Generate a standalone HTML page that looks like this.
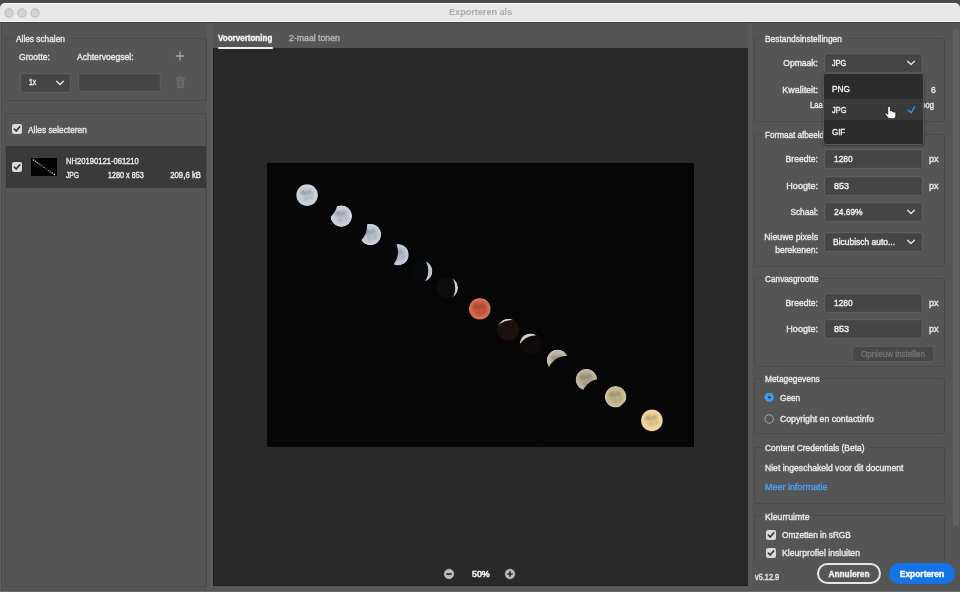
<!DOCTYPE html>
<html><head><meta charset="utf-8">
<style>
*{box-sizing:border-box;margin:0;padding:0}
html,body{width:960px;height:592px;overflow:hidden;background:#4b4b4b}
body{position:relative;font-family:"Liberation Sans",sans-serif;color:#dcdcdc}
.a{position:absolute}
.t{position:absolute;white-space:nowrap;line-height:12px;-webkit-text-stroke:0.4px currentColor}
</style></head><body>
<div class="a" style="left:0px;top:3px;width:960px;height:589px;background:#555555;border-radius:6px 6px 0 0"></div>
<div class="a" style="left:0px;top:22px;width:1px;height:570px;background:#606060"></div>
<div class="a" style="left:1px;top:22px;width:1px;height:570px;background:#4c4c4c"></div>
<div class="a" style="left:207px;top:22px;width:6px;height:568px;background:#5a5a5a"></div>
<div class="a" style="left:748px;top:22px;width:4px;height:568px;background:#5a5a5a"></div>
<div class="a" style="left:207px;top:586px;width:545px;height:4px;background:#5a5a5a"></div>
<div class="a" style="left:0px;top:591px;width:960px;height:1px;background:#6a6a6a"></div>
<div class="a" style="left:0px;top:3px;width:960px;height:19px;background:#e8e8e8;border-top:1px solid #fafafa;border-bottom:1px solid #f6f6f6;border-radius:5px 5px 0 0"></div>
<div class="a" style="left:0px;top:22px;width:960px;height:1px;background:#404040"></div>
<svg class="a" style="left:3.5999999999999996px;top:7.5px" width="10" height="10"><circle cx="5" cy="5" r="4.1" fill="#d4d4d4" stroke="#bdbdbd" stroke-width="1.1"/></svg>
<svg class="a" style="left:16.6px;top:7.5px" width="10" height="10"><circle cx="5" cy="5" r="4.1" fill="#d4d4d4" stroke="#bdbdbd" stroke-width="1.1"/></svg>
<svg class="a" style="left:30.0px;top:7.5px" width="10" height="10"><circle cx="5" cy="5" r="4.1" fill="#d4d4d4" stroke="#bdbdbd" stroke-width="1.1"/></svg>
<div class="t" id="t0" style="left:449.30px;transform-origin:0 50%;top:6.45px;font-size:8.5px;letter-spacing:0px;color:#a9a9a9;font-weight:bold;transform:scaleX(1.0704);-webkit-text-stroke:0">Exporteren als</div>
<div class="a" style="left:5px;top:38px;width:202px;height:63px;border:1px solid #4a4a4a;border-radius:2px"></div>
<div class="a" style="left:13px;top:37px;width:56px;height:3px;background:#555555"></div>
<div class="t" id="t1" style="left:16.00px;transform-origin:0 50%;top:32.71px;font-size:9.5px;letter-spacing:0px;color:#e8e8e8;font-weight:normal;transform:scaleX(0.8741);">Alles schalen</div>
<div class="t" id="t2" style="left:18.70px;transform-origin:0 50%;top:50.71px;font-size:9.5px;letter-spacing:0px;color:#e8e8e8;font-weight:normal;transform:scaleX(0.9019);">Grootte:</div>
<div class="t" id="t3" style="left:77.00px;transform-origin:0 50%;top:50.71px;font-size:9.5px;letter-spacing:0px;color:#e8e8e8;font-weight:normal;transform:scaleX(0.9006);">Achtervoegsel:</div>
<svg class="a" style="left:175px;top:51px" width="10" height="10"><path d="M5 0.8v8.4M0.8 5h8.4" stroke="#a9a9a9" stroke-width="1.3"/></svg>
<div class="a" style="left:19.5px;top:72.5px;width:51.5px;height:20px;background:#454545;border:1px solid #5e5e5e;border-radius:3px;box-shadow:inset 0 0 0 0.5px #4e4e4e"></div>
<div class="t" id="t4" style="left:28.50px;transform-origin:0 50%;top:76.21px;font-size:9.5px;letter-spacing:0px;color:#eeeeee;font-weight:normal;transform:scaleX(0.7226);">1x</div>
<svg class="a" style="left:55px;top:79.5px" width="10" height="6"><path d="M1.6 1.3l3.4 3.3l3.4-3.3" stroke="#e0e0e0" stroke-width="1.4" fill="none" stroke-linecap="round" stroke-linejoin="round"/></svg>
<div class="a" style="left:78px;top:73px;width:83px;height:19px;background:#454545;border:1px solid #5e5e5e;border-radius:3px;box-shadow:inset 0 0 0 0.5px #4e4e4e"></div>
<svg class="a" style="left:175px;top:76px" width="11" height="13"><path d="M0.6 2.2h9.8" stroke="#6e6e6e" stroke-width="1.2"/><path d="M3.8 2V0.9h3.4V2" stroke="#6e6e6e" stroke-width="1" fill="none"/><path d="M1.6 3.4h7.8l-0.8 8.8h-6.2z" fill="#6e6e6e"/><path d="M3.9 4.5v6.5M5.5 4.5v6.5M7.1 4.5v6.5" stroke="#555" stroke-width="0.7"/></svg>
<div class="a" style="left:5px;top:113px;width:202px;height:474px;border:1px solid #4a4a4a;border-radius:2px"></div>
<svg class="a" style="left:12px;top:124px" width="10" height="10"><rect x="0" y="0" width="10" height="10" rx="2" fill="#d9d9d9"/><path d="M2.3 5.1l1.9 2L7.8 2.8" stroke="#2e2e2e" stroke-width="1.5" fill="none" stroke-linecap="round" stroke-linejoin="round"/></svg>
<div class="t" id="t5" style="left:28.00px;transform-origin:0 50%;top:123.71px;font-size:9.5px;letter-spacing:0px;color:#e8e8e8;font-weight:normal;transform:scaleX(0.8778);">Alles selecteren</div>
<div class="a" style="left:6px;top:146px;width:200px;height:42px;background:#3a3a3a"></div>
<svg class="a" style="left:12px;top:162px" width="10" height="10"><rect x="0" y="0" width="10" height="10" rx="2" fill="#d9d9d9"/><path d="M2.3 5.1l1.9 2L7.8 2.8" stroke="#2e2e2e" stroke-width="1.5" fill="none" stroke-linecap="round" stroke-linejoin="round"/></svg>
<svg class="a" style="left:31px;top:158px" width="26" height="18"><rect width="26" height="18" fill="#030303"/><circle cx="2.44" cy="2.03" r="0.85" fill="#c4ccd6"/><circle cx="4.52" cy="3.37" r="0.85" fill="#b0b8c0"/><circle cx="6.30" cy="4.53" r="0.85" fill="#9aa2aa"/><circle cx="7.98" cy="5.81" r="0.85" fill="#7a8088"/><circle cx="9.41" cy="6.86" r="0.85" fill="#5a6068"/><circle cx="10.97" cy="7.91" r="0.85" fill="#484850"/><circle cx="12.96" cy="9.24" r="0.85" fill="#e07050"/><circle cx="14.69" cy="10.56" r="0.85" fill="#4a3028"/><circle cx="16.04" cy="11.48" r="0.85" fill="#3a3028"/><circle cx="17.69" cy="12.50" r="0.85" fill="#8a8070"/><circle cx="19.45" cy="13.73" r="0.85" fill="#a09070"/><circle cx="21.23" cy="14.82" r="0.85" fill="#c0a870"/><circle cx="23.44" cy="16.31" r="0.85" fill="#f0d090"/></svg>
<div class="t" id="t6" style="left:65.50px;transform-origin:0 50%;top:155.11px;font-size:9.5px;letter-spacing:0px;color:#ececec;font-weight:normal;transform:scaleX(0.8015);">NH20190121-061210</div>
<div class="t" id="t7" style="left:65.50px;transform-origin:0 50%;top:168.51px;font-size:9.5px;letter-spacing:0px;color:#ececec;font-weight:normal;transform:scaleX(0.7097);">JPG</div>
<div class="t" id="t8" style="left:108.00px;transform-origin:0 50%;top:168.51px;font-size:9.5px;letter-spacing:0px;color:#ececec;font-weight:normal;transform:scaleX(0.7618);">1280 x 853</div>
<div class="t" id="t9" style="left:-98.60px;width:300px;text-align:right;transform-origin:100% 50%;top:168.51px;font-size:9.5px;letter-spacing:0px;color:#ececec;font-weight:normal;transform:scaleX(0.8217);">209,6 kB</div>
<div class="a" style="left:213px;top:48px;width:535px;height:538px;background:#292929;border-left:1px solid #202020;border-bottom:1px solid #202020"></div>
<div class="t" id="t10" style="left:218.00px;transform-origin:0 50%;top:31.68px;font-size:9px;letter-spacing:0px;color:#f4f4f4;font-weight:bold;transform:scaleX(0.8923);">Voorvertoning</div>
<div class="a" style="left:218px;top:47px;width:55px;height:2px;background:#eeeeee;border-radius:1px"></div>
<div class="t" id="t11" style="left:288.80px;transform-origin:0 50%;top:31.51px;font-size:9.5px;letter-spacing:0px;color:#b4b4b4;font-weight:normal;transform:scaleX(0.9184);">2-maal tonen</div>
<svg class="a" style="left:267px;top:163px" width="427" height="284">
<rect width="427" height="284" fill="#060606"/>
<defs>
<filter id="bl" x="-50%" y="-50%" width="200%" height="200%"><feGaussianBlur stdDeviation="0.55"/></filter>
<filter id="bm" x="-50%" y="-50%" width="200%" height="200%"><feGaussianBlur stdDeviation="0.9"/></filter>
<radialGradient id="gw" cx="50%" cy="50%" r="50%"><stop offset="0.6" stop-color="#fff" stop-opacity="0"/><stop offset="0.95" stop-color="#fff" stop-opacity=".18"/><stop offset="1" stop-color="#000" stop-opacity=".2"/></radialGradient>
<mask id="m1"><circle cx="74.3" cy="53.1" r="10.8" fill="#fff"/><circle cx="50.7" cy="38.4" r="20" fill="#000" filter="url(#bl)"/></mask>
<mask id="m2"><circle cx="103.4" cy="71.5" r="10.8" fill="#fff"/><circle cx="80.1" cy="63.0" r="20" fill="#000" filter="url(#bl)"/></mask>
<mask id="m3"><circle cx="131.0" cy="91.7" r="10.8" fill="#fff"/><circle cx="111.0" cy="88.9" r="20" fill="#000" filter="url(#bl)"/></mask>
<mask id="m4"><circle cx="154.6" cy="108.2" r="10.8" fill="#fff"/><circle cx="141.2" cy="107.7" r="20" fill="#000" filter="url(#bl)"/></mask>
<mask id="m5"><circle cx="180.2" cy="124.8" r="10.8" fill="#fff"/><circle cx="168.2" cy="125.2" r="20" fill="#000" filter="url(#bl)"/></mask>
<mask id="m7"><circle cx="241.2" cy="166.6" r="10.8" fill="#fff"/><circle cx="245.0" cy="176.9" r="20" fill="#000" filter="url(#bl)"/></mask>
<mask id="m8"><circle cx="263.5" cy="181.2" r="10.8" fill="#fff"/><circle cx="269.4" cy="192.2" r="20" fill="#000" filter="url(#bl)"/></mask>
<mask id="m9"><circle cx="290.5" cy="197.3" r="10.8" fill="#fff"/><circle cx="300.1" cy="212.7" r="20" fill="#000" filter="url(#bl)"/></mask>
<mask id="m10"><circle cx="319.4" cy="216.6" r="10.8" fill="#fff"/><circle cx="334.3" cy="235.7" r="20" fill="#000" filter="url(#bl)"/></mask>
<mask id="m11"><circle cx="348.6" cy="233.8" r="10.8" fill="#fff"/><circle cx="368.7" cy="256.1" r="20" fill="#000" filter="url(#bl)"/></mask>
</defs>
<circle cx="40.1" cy="32.1" r="10.8" fill="#c4ccd6"/><ellipse cx="36.6" cy="29.6" rx="3.4" ry="2.6" fill="#303840" opacity="0.26" filter="url(#bm)"/><ellipse cx="42.6" cy="29.1" rx="2.8" ry="2.4" fill="#303840" opacity="0.24" filter="url(#bm)"/><ellipse cx="39.1" cy="35.6" rx="2.8" ry="1.8" fill="#303840" opacity="0.16" filter="url(#bm)"/><ellipse cx="44.6" cy="34.1" rx="1.6" ry="2.2" fill="#303840" opacity="0.18" filter="url(#bm)"/><ellipse cx="40.1" cy="31.6" rx="1.5" ry="1.5" fill="#303840" opacity="0.14" filter="url(#bm)"/><circle cx="40.1" cy="32.1" r="10.8" fill="url(#gw)"/>
<circle cx="74.3" cy="53.1" r="10.8" fill="#070708"/><g mask="url(#m1)"><circle cx="74.3" cy="53.1" r="10.8" fill="#c2cad4"/><ellipse cx="70.8" cy="50.6" rx="3.4" ry="2.6" fill="#303840" opacity="0.26" filter="url(#bm)"/><ellipse cx="76.8" cy="50.1" rx="2.8" ry="2.4" fill="#303840" opacity="0.24" filter="url(#bm)"/><ellipse cx="73.3" cy="56.6" rx="2.8" ry="1.8" fill="#303840" opacity="0.16" filter="url(#bm)"/><ellipse cx="78.8" cy="55.1" rx="1.6" ry="2.2" fill="#303840" opacity="0.18" filter="url(#bm)"/><ellipse cx="74.3" cy="52.6" rx="1.5" ry="1.5" fill="#303840" opacity="0.14" filter="url(#bm)"/><circle cx="74.3" cy="53.1" r="10.8" fill="url(#gw)"/></g>
<circle cx="103.4" cy="71.5" r="10.8" fill="#070708"/><g mask="url(#m2)"><circle cx="103.4" cy="71.5" r="10.8" fill="#bec6d0"/><ellipse cx="99.9" cy="69.0" rx="3.4" ry="2.6" fill="#303840" opacity="0.26" filter="url(#bm)"/><ellipse cx="105.9" cy="68.5" rx="2.8" ry="2.4" fill="#303840" opacity="0.24" filter="url(#bm)"/><ellipse cx="102.4" cy="75.0" rx="2.8" ry="1.8" fill="#303840" opacity="0.16" filter="url(#bm)"/><ellipse cx="107.9" cy="73.5" rx="1.6" ry="2.2" fill="#303840" opacity="0.18" filter="url(#bm)"/><ellipse cx="103.4" cy="71.0" rx="1.5" ry="1.5" fill="#303840" opacity="0.14" filter="url(#bm)"/><circle cx="103.4" cy="71.5" r="10.8" fill="url(#gw)"/></g>
<circle cx="131.0" cy="91.7" r="10.8" fill="#070709"/><g mask="url(#m3)"><circle cx="131.0" cy="91.7" r="10.8" fill="#bac2cc"/><ellipse cx="127.5" cy="89.2" rx="3.4" ry="2.6" fill="#303840" opacity="0.26" filter="url(#bm)"/><ellipse cx="133.5" cy="88.7" rx="2.8" ry="2.4" fill="#303840" opacity="0.24" filter="url(#bm)"/><ellipse cx="130.0" cy="95.2" rx="2.8" ry="1.8" fill="#303840" opacity="0.16" filter="url(#bm)"/><ellipse cx="135.5" cy="93.7" rx="1.6" ry="2.2" fill="#303840" opacity="0.18" filter="url(#bm)"/><ellipse cx="131.0" cy="91.2" rx="1.5" ry="1.5" fill="#303840" opacity="0.14" filter="url(#bm)"/><circle cx="131.0" cy="91.7" r="10.8" fill="url(#gw)"/></g>
<circle cx="154.6" cy="108.2" r="10.8" fill="#08090b"/><g mask="url(#m4)"><circle cx="154.6" cy="108.2" r="10.8" fill="#b6bec8"/><ellipse cx="151.1" cy="105.7" rx="3.4" ry="2.6" fill="#303840" opacity="0.26" filter="url(#bm)"/><ellipse cx="157.1" cy="105.2" rx="2.8" ry="2.4" fill="#303840" opacity="0.24" filter="url(#bm)"/><ellipse cx="153.6" cy="111.7" rx="2.8" ry="1.8" fill="#303840" opacity="0.16" filter="url(#bm)"/><ellipse cx="159.1" cy="110.2" rx="1.6" ry="2.2" fill="#303840" opacity="0.18" filter="url(#bm)"/><ellipse cx="154.6" cy="107.7" rx="1.5" ry="1.5" fill="#303840" opacity="0.14" filter="url(#bm)"/><circle cx="154.6" cy="108.2" r="10.8" fill="url(#gw)"/></g>
<circle cx="180.2" cy="124.8" r="10.8" fill="#0d0b0e"/><g mask="url(#m5)"><circle cx="180.2" cy="124.8" r="10.8" fill="#c0c8d4"/><ellipse cx="176.7" cy="122.3" rx="3.4" ry="2.6" fill="#303840" opacity="0.26" filter="url(#bm)"/><ellipse cx="182.7" cy="121.8" rx="2.8" ry="2.4" fill="#303840" opacity="0.24" filter="url(#bm)"/><ellipse cx="179.2" cy="128.3" rx="2.8" ry="1.8" fill="#303840" opacity="0.16" filter="url(#bm)"/><ellipse cx="184.7" cy="126.8" rx="1.6" ry="2.2" fill="#303840" opacity="0.18" filter="url(#bm)"/><ellipse cx="180.2" cy="124.3" rx="1.5" ry="1.5" fill="#303840" opacity="0.14" filter="url(#bm)"/><circle cx="180.2" cy="124.8" r="10.8" fill="url(#gw)"/></g>
<circle cx="212.8" cy="145.8" r="10.8" fill="#c95a3a"/><ellipse cx="209.3" cy="143.3" rx="3.4" ry="2.6" fill="#5a2010" opacity="0.26" filter="url(#bm)"/><ellipse cx="215.3" cy="142.8" rx="2.8" ry="2.4" fill="#5a2010" opacity="0.24" filter="url(#bm)"/><ellipse cx="211.8" cy="149.3" rx="2.8" ry="1.8" fill="#5a2010" opacity="0.16" filter="url(#bm)"/><ellipse cx="217.3" cy="147.8" rx="1.6" ry="2.2" fill="#5a2010" opacity="0.18" filter="url(#bm)"/><ellipse cx="212.8" cy="145.3" rx="1.5" ry="1.5" fill="#5a2010" opacity="0.14" filter="url(#bm)"/><circle cx="212.8" cy="145.8" r="10.8" fill="url(#gw)"/>
<circle cx="241.2" cy="166.6" r="10.8" fill="#1e100c"/><g mask="url(#m7)"><circle cx="241.2" cy="166.6" r="10.8" fill="#d4c8c0"/><ellipse cx="237.7" cy="164.1" rx="3.4" ry="2.6" fill="#403828" opacity="0.26" filter="url(#bm)"/><ellipse cx="243.7" cy="163.6" rx="2.8" ry="2.4" fill="#403828" opacity="0.24" filter="url(#bm)"/><ellipse cx="240.2" cy="170.1" rx="2.8" ry="1.8" fill="#403828" opacity="0.16" filter="url(#bm)"/><ellipse cx="245.7" cy="168.6" rx="1.6" ry="2.2" fill="#403828" opacity="0.18" filter="url(#bm)"/><ellipse cx="241.2" cy="166.1" rx="1.5" ry="1.5" fill="#403828" opacity="0.14" filter="url(#bm)"/><circle cx="241.2" cy="166.6" r="10.8" fill="url(#gw)"/></g>
<circle cx="263.5" cy="181.2" r="10.8" fill="#0d0a09"/><g mask="url(#m8)"><circle cx="263.5" cy="181.2" r="10.8" fill="#d0c8c0"/><ellipse cx="260.0" cy="178.7" rx="3.4" ry="2.6" fill="#403828" opacity="0.26" filter="url(#bm)"/><ellipse cx="266.0" cy="178.2" rx="2.8" ry="2.4" fill="#403828" opacity="0.24" filter="url(#bm)"/><ellipse cx="262.5" cy="184.7" rx="2.8" ry="1.8" fill="#403828" opacity="0.16" filter="url(#bm)"/><ellipse cx="268.0" cy="183.2" rx="1.6" ry="2.2" fill="#403828" opacity="0.18" filter="url(#bm)"/><ellipse cx="263.5" cy="180.7" rx="1.5" ry="1.5" fill="#403828" opacity="0.14" filter="url(#bm)"/><circle cx="263.5" cy="181.2" r="10.8" fill="url(#gw)"/></g>
<circle cx="290.5" cy="197.3" r="10.8" fill="#080707"/><g mask="url(#m9)"><circle cx="290.5" cy="197.3" r="10.8" fill="#bcb4a4"/><ellipse cx="287.0" cy="194.8" rx="3.4" ry="2.6" fill="#403828" opacity="0.26" filter="url(#bm)"/><ellipse cx="293.0" cy="194.3" rx="2.8" ry="2.4" fill="#403828" opacity="0.24" filter="url(#bm)"/><ellipse cx="289.5" cy="200.8" rx="2.8" ry="1.8" fill="#403828" opacity="0.16" filter="url(#bm)"/><ellipse cx="295.0" cy="199.3" rx="1.6" ry="2.2" fill="#403828" opacity="0.18" filter="url(#bm)"/><ellipse cx="290.5" cy="196.8" rx="1.5" ry="1.5" fill="#403828" opacity="0.14" filter="url(#bm)"/><circle cx="290.5" cy="197.3" r="10.8" fill="url(#gw)"/></g>
<circle cx="319.4" cy="216.6" r="10.8" fill="#080707"/><g mask="url(#m10)"><circle cx="319.4" cy="216.6" r="10.8" fill="#b4aa94"/><ellipse cx="315.9" cy="214.1" rx="3.4" ry="2.6" fill="#403828" opacity="0.26" filter="url(#bm)"/><ellipse cx="321.9" cy="213.6" rx="2.8" ry="2.4" fill="#403828" opacity="0.24" filter="url(#bm)"/><ellipse cx="318.4" cy="220.1" rx="2.8" ry="1.8" fill="#403828" opacity="0.16" filter="url(#bm)"/><ellipse cx="323.9" cy="218.6" rx="1.6" ry="2.2" fill="#403828" opacity="0.18" filter="url(#bm)"/><ellipse cx="319.4" cy="216.1" rx="1.5" ry="1.5" fill="#403828" opacity="0.14" filter="url(#bm)"/><circle cx="319.4" cy="216.6" r="10.8" fill="url(#gw)"/></g>
<circle cx="348.6" cy="233.8" r="10.8" fill="#0a0908"/><g mask="url(#m11)"><circle cx="348.6" cy="233.8" r="10.8" fill="#c4b48c"/><ellipse cx="345.1" cy="231.3" rx="3.4" ry="2.6" fill="#403828" opacity="0.26" filter="url(#bm)"/><ellipse cx="351.1" cy="230.8" rx="2.8" ry="2.4" fill="#403828" opacity="0.24" filter="url(#bm)"/><ellipse cx="347.6" cy="237.3" rx="2.8" ry="1.8" fill="#403828" opacity="0.16" filter="url(#bm)"/><ellipse cx="353.1" cy="235.8" rx="1.6" ry="2.2" fill="#403828" opacity="0.18" filter="url(#bm)"/><ellipse cx="348.6" cy="233.3" rx="1.5" ry="1.5" fill="#403828" opacity="0.14" filter="url(#bm)"/><circle cx="348.6" cy="233.8" r="10.8" fill="url(#gw)"/></g>
<circle cx="384.9" cy="257.4" r="10.8" fill="#eccf94"/><ellipse cx="381.4" cy="254.9" rx="3.4" ry="2.6" fill="#403828" opacity="0.26" filter="url(#bm)"/><ellipse cx="387.4" cy="254.4" rx="2.8" ry="2.4" fill="#403828" opacity="0.24" filter="url(#bm)"/><ellipse cx="383.9" cy="260.9" rx="2.8" ry="1.8" fill="#403828" opacity="0.16" filter="url(#bm)"/><ellipse cx="389.4" cy="259.4" rx="1.6" ry="2.2" fill="#403828" opacity="0.18" filter="url(#bm)"/><ellipse cx="384.9" cy="256.9" rx="1.5" ry="1.5" fill="#403828" opacity="0.14" filter="url(#bm)"/><circle cx="384.9" cy="257.4" r="10.8" fill="url(#gw)"/>
<circle cx="138" cy="43" r="0.5" fill="#2a2a2a"/>
<circle cx="278" cy="21" r="0.5" fill="#2a2a2a"/>
<circle cx="229" cy="104" r="0.5" fill="#2a2a2a"/>
<circle cx="25" cy="144" r="0.5" fill="#2a2a2a"/>
<circle cx="16" cy="123" r="0.5" fill="#2a2a2a"/>
<circle cx="30" cy="26" r="0.5" fill="#2a2a2a"/>
<circle cx="181" cy="235" r="0.5" fill="#2a2a2a"/>
<circle cx="53" cy="63" r="0.5" fill="#2a2a2a"/>
<circle cx="268" cy="269" r="0.5" fill="#2a2a2a"/>
<circle cx="246" cy="113" r="0.5" fill="#2a2a2a"/>
<circle cx="417" cy="13" r="0.5" fill="#2a2a2a"/>
<circle cx="367" cy="82" r="0.5" fill="#2a2a2a"/>
<circle cx="62" cy="33" r="0.5" fill="#2a2a2a"/>
<circle cx="132" cy="232" r="0.5" fill="#2a2a2a"/>
<circle cx="77" cy="165" r="0.5" fill="#2a2a2a"/>
<circle cx="273" cy="106" r="0.5" fill="#2a2a2a"/>
<circle cx="234" cy="18" r="0.5" fill="#2a2a2a"/>
<circle cx="25" cy="58" r="0.5" fill="#2a2a2a"/>
<circle cx="291" cy="121" r="0.5" fill="#2a2a2a"/>
<circle cx="134" cy="166" r="0.5" fill="#2a2a2a"/>
<circle cx="194" cy="85" r="0.5" fill="#2a2a2a"/>
<circle cx="339" cy="199" r="0.5" fill="#2a2a2a"/>
<circle cx="104" cy="163" r="0.5" fill="#2a2a2a"/>
<circle cx="224" cy="249" r="0.5" fill="#2a2a2a"/>
<circle cx="311" cy="82" r="0.5" fill="#2a2a2a"/>
<circle cx="419" cy="34" r="0.5" fill="#2a2a2a"/>
<circle cx="179" cy="215" r="0.5" fill="#2a2a2a"/>
<circle cx="65" cy="139" r="0.5" fill="#2a2a2a"/>
<circle cx="17" cy="190" r="0.5" fill="#2a2a2a"/>
<circle cx="326" cy="163" r="0.5" fill="#2a2a2a"/>
<circle cx="374" cy="89" r="0.5" fill="#2a2a2a"/>
<circle cx="297" cy="169" r="0.5" fill="#2a2a2a"/>
<circle cx="248" cy="130" r="0.5" fill="#2a2a2a"/>
<circle cx="359" cy="268" r="0.5" fill="#2a2a2a"/>
<circle cx="202" cy="189" r="0.5" fill="#2a2a2a"/>
<circle cx="26" cy="199" r="0.5" fill="#2a2a2a"/>
<circle cx="276" cy="282" r="0.5" fill="#2a2a2a"/>
<circle cx="351" cy="81" r="0.5" fill="#2a2a2a"/>
<circle cx="165" cy="190" r="0.5" fill="#2a2a2a"/>
<circle cx="10" cy="131" r="0.5" fill="#2a2a2a"/>
<circle cx="72" cy="33" r="0.5" fill="#2a2a2a"/>
<circle cx="25" cy="218" r="0.5" fill="#2a2a2a"/>
<circle cx="55" cy="70" r="0.5" fill="#2a2a2a"/>
<circle cx="167" cy="247" r="0.5" fill="#2a2a2a"/>
<circle cx="34" cy="128" r="0.5" fill="#2a2a2a"/>
</svg>
<svg class="a" style="left:443px;top:568px" width="12" height="12"><circle cx="6" cy="6" r="5.4" fill="#bdbdbd" stroke="#1e1e1e" stroke-width="0.6"/><path d="M3.3 6h5.4" stroke="#2a2a2a" stroke-width="1.7"/></svg>
<div class="t" id="t12" style="left:471.50px;transform-origin:0 50%;top:568.31px;font-size:9.5px;letter-spacing:0px;color:#f2f2f2;font-weight:normal;transform:scaleX(0.9341);-webkit-text-stroke:0.55px #f2f2f2">50%</div>
<svg class="a" style="left:504px;top:568px" width="12" height="12"><circle cx="6" cy="6" r="5.4" fill="#bdbdbd" stroke="#1e1e1e" stroke-width="0.6"/><path d="M3.3 6h5.4M6 3.3v5.4" stroke="#2a2a2a" stroke-width="1.7"/></svg>
<div class="a" style="left:754px;top:38px;width:191px;height:84px;border:1px solid #4a4a4a;border-radius:2px"></div>
<div class="a" style="left:762px;top:37px;width:84px;height:3px;background:#555555"></div>
<div class="t" id="t13" style="left:765.00px;transform-origin:0 50%;top:32.71px;font-size:9.5px;letter-spacing:0px;color:#e8e8e8;font-weight:normal;transform:scaleX(0.8830);">Bestandsinstellingen</div>
<div class="t" id="t14" style="left:518.00px;width:300px;text-align:right;transform-origin:100% 50%;top:56.71px;font-size:9.5px;letter-spacing:0px;color:#e8e8e8;font-weight:normal;transform:scaleX(0.9014);">Opmaak:</div>
<div class="a" style="left:824px;top:53px;width:99px;height:20px;background:#454545;border:1px solid #5e5e5e;border-radius:3px;box-shadow:inset 0 0 0 0.5px #4e4e4e"></div>
<div class="t" id="t15" style="left:832.00px;transform-origin:0 50%;top:56.71px;font-size:9.5px;letter-spacing:0px;color:#f0f0f0;font-weight:normal;transform:scaleX(0.7633);">JPG</div>
<svg class="a" style="left:906px;top:59.5px" width="10" height="6"><path d="M1.6 1.3l3.4 3.3l3.4-3.3" stroke="#e0e0e0" stroke-width="1.4" fill="none" stroke-linecap="round" stroke-linejoin="round"/></svg>
<div class="t" id="t16" style="left:518.00px;width:300px;text-align:right;transform-origin:100% 50%;top:83.71px;font-size:9.5px;letter-spacing:0px;color:#e8e8e8;font-weight:normal;transform:scaleX(0.9375);">Kwaliteit:</div>
<div class="t" id="t17" style="left:931.00px;transform-origin:0 50%;top:83.71px;font-size:9.5px;letter-spacing:0px;color:#ececec;font-weight:normal;transform:scaleX(0.9000);">6</div>
<div class="t" id="t18" style="left:810.00px;transform-origin:0 50%;top:99.05px;font-size:8.5px;letter-spacing:0px;color:#e8e8e8;font-weight:normal;transform:scaleX(0.9000);">Laag</div>
<div class="t" id="t19" style="left:634.00px;width:300px;text-align:right;transform-origin:100% 50%;top:99.05px;font-size:8.5px;letter-spacing:0px;color:#e8e8e8;font-weight:normal;transform:scaleX(0.9000);">Hoog</div>
<div class="a" style="left:754px;top:134px;width:191px;height:133px;border:1px solid #4a4a4a;border-radius:2px"></div>
<div class="a" style="left:762px;top:133px;width:78px;height:3px;background:#555555"></div>
<div class="t" id="t20" style="left:765.00px;transform-origin:0 50%;top:129.21px;font-size:9.5px;letter-spacing:0px;color:#e8e8e8;font-weight:normal;transform:scaleX(0.8526);">Formaat afbeelding</div>
<div class="t" id="t21" style="left:518.00px;width:300px;text-align:right;transform-origin:100% 50%;top:153.21px;font-size:9.5px;letter-spacing:0px;color:#e8e8e8;font-weight:normal;transform:scaleX(0.9034);">Breedte:</div>
<div class="a" style="left:824px;top:149px;width:99px;height:20px;background:#454545;border:1px solid #5e5e5e;border-radius:3px;box-shadow:inset 0 0 0 0.5px #4e4e4e"></div>
<div class="t" id="t22" style="left:833.50px;transform-origin:0 50%;top:153.21px;font-size:9.5px;letter-spacing:0px;color:#f0f0f0;font-weight:normal;transform:scaleX(0.8801);">1280</div>
<div class="t" id="t23" style="left:929.00px;transform-origin:0 50%;top:153.21px;font-size:9.5px;letter-spacing:0px;color:#e8e8e8;font-weight:normal;transform:scaleX(0.9526);">px</div>
<div class="t" id="t24" style="left:518.00px;width:300px;text-align:right;transform-origin:100% 50%;top:179.71px;font-size:9.5px;letter-spacing:0px;color:#e8e8e8;font-weight:normal;transform:scaleX(0.9517);">Hoogte:</div>
<div class="a" style="left:824px;top:175.5px;width:99px;height:20px;background:#454545;border:1px solid #5e5e5e;border-radius:3px;box-shadow:inset 0 0 0 0.5px #4e4e4e"></div>
<div class="t" id="t25" style="left:833.50px;transform-origin:0 50%;top:179.71px;font-size:9.5px;letter-spacing:0px;color:#f0f0f0;font-weight:normal;transform:scaleX(0.9407);">853</div>
<div class="t" id="t26" style="left:929.00px;transform-origin:0 50%;top:179.71px;font-size:9.5px;letter-spacing:0px;color:#e8e8e8;font-weight:normal;transform:scaleX(0.9526);">px</div>
<div class="t" id="t27" style="left:518.00px;width:300px;text-align:right;transform-origin:100% 50%;top:206.21px;font-size:9.5px;letter-spacing:0px;color:#e8e8e8;font-weight:normal;transform:scaleX(0.8679);">Schaal:</div>
<div class="a" style="left:824px;top:202px;width:99px;height:20px;background:#454545;border:1px solid #5e5e5e;border-radius:3px;box-shadow:inset 0 0 0 0.5px #4e4e4e"></div>
<div class="t" id="t28" style="left:833.50px;transform-origin:0 50%;top:206.21px;font-size:9.5px;letter-spacing:0px;color:#f0f0f0;font-weight:normal;transform:scaleX(0.8881);">24.69%</div>
<svg class="a" style="left:906px;top:209px" width="10" height="6"><path d="M1.6 1.3l3.4 3.3l3.4-3.3" stroke="#e0e0e0" stroke-width="1.4" fill="none" stroke-linecap="round" stroke-linejoin="round"/></svg>
<div class="t" id="t29" style="left:518.00px;width:300px;text-align:right;transform-origin:100% 50%;top:230.51px;font-size:9.5px;letter-spacing:0px;color:#e8e8e8;font-weight:normal;transform:scaleX(0.9173);">Nieuwe pixels</div>
<div class="t" id="t30" style="left:518.00px;width:300px;text-align:right;transform-origin:100% 50%;top:243.51px;font-size:9.5px;letter-spacing:0px;color:#e8e8e8;font-weight:normal;transform:scaleX(0.9009);">berekenen:</div>
<div class="a" style="left:824px;top:232px;width:99px;height:20px;background:#454545;border:1px solid #5e5e5e;border-radius:3px;box-shadow:inset 0 0 0 0.5px #4e4e4e"></div>
<div class="t" id="t31" style="left:833.00px;transform-origin:0 50%;top:236.21px;font-size:9.5px;letter-spacing:0px;color:#f0f0f0;font-weight:normal;transform:scaleX(0.8900);">Bicubisch auto...</div>
<svg class="a" style="left:906px;top:239px" width="10" height="6"><path d="M1.6 1.3l3.4 3.3l3.4-3.3" stroke="#e0e0e0" stroke-width="1.4" fill="none" stroke-linecap="round" stroke-linejoin="round"/></svg>
<div class="a" style="left:754px;top:278px;width:191px;height:89px;border:1px solid #4a4a4a;border-radius:2px"></div>
<div class="a" style="left:762px;top:277px;width:58px;height:3px;background:#555555"></div>
<div class="t" id="t32" style="left:765.00px;transform-origin:0 50%;top:272.71px;font-size:9.5px;letter-spacing:0px;color:#e8e8e8;font-weight:normal;transform:scaleX(0.8690);">Canvasgrootte</div>
<div class="t" id="t33" style="left:518.00px;width:300px;text-align:right;transform-origin:100% 50%;top:297.21px;font-size:9.5px;letter-spacing:0px;color:#e8e8e8;font-weight:normal;transform:scaleX(0.9034);">Breedte:</div>
<div class="a" style="left:824px;top:293px;width:99px;height:20px;background:#454545;border:1px solid #5e5e5e;border-radius:3px;box-shadow:inset 0 0 0 0.5px #4e4e4e"></div>
<div class="t" id="t34" style="left:833.50px;transform-origin:0 50%;top:297.21px;font-size:9.5px;letter-spacing:0px;color:#f0f0f0;font-weight:normal;transform:scaleX(0.8801);">1280</div>
<div class="t" id="t35" style="left:929.00px;transform-origin:0 50%;top:297.21px;font-size:9.5px;letter-spacing:0px;color:#e8e8e8;font-weight:normal;transform:scaleX(0.9526);">px</div>
<div class="t" id="t36" style="left:518.00px;width:300px;text-align:right;transform-origin:100% 50%;top:323.21px;font-size:9.5px;letter-spacing:0px;color:#e8e8e8;font-weight:normal;transform:scaleX(0.9517);">Hoogte:</div>
<div class="a" style="left:824px;top:319px;width:99px;height:20px;background:#454545;border:1px solid #5e5e5e;border-radius:3px;box-shadow:inset 0 0 0 0.5px #4e4e4e"></div>
<div class="t" id="t37" style="left:833.50px;transform-origin:0 50%;top:323.21px;font-size:9.5px;letter-spacing:0px;color:#f0f0f0;font-weight:normal;transform:scaleX(0.9407);">853</div>
<div class="t" id="t38" style="left:929.00px;transform-origin:0 50%;top:323.21px;font-size:9.5px;letter-spacing:0px;color:#e8e8e8;font-weight:normal;transform:scaleX(0.9526);">px</div>
<div class="a" style="left:852px;top:345.5px;width:82px;height:16px;background:#474747;border:1px solid #5c5c5c;border-radius:3px"></div>
<div class="t" id="t39" style="left:742.50px;width:300px;text-align:center;transform-origin:50% 50%;top:347.88px;font-size:9px;letter-spacing:0px;color:#737373;font-weight:normal;transform:scaleX(0.9000);">Opnieuw instellen</div>
<div class="a" style="left:754px;top:378px;width:191px;height:56px;border:1px solid #4a4a4a;border-radius:2px"></div>
<div class="a" style="left:762px;top:377px;width:56px;height:3px;background:#555555"></div>
<div class="t" id="t40" style="left:765.00px;transform-origin:0 50%;top:372.71px;font-size:9.5px;letter-spacing:0px;color:#e8e8e8;font-weight:normal;transform:scaleX(0.8776);">Metagegevens</div>
<svg class="a" style="left:764px;top:393px" width="11" height="10"><circle cx="5.3" cy="4.3" r="4.7" fill="#3b9af4"/><circle cx="5.3" cy="4.3" r="1.2" fill="#2a2a2a"/></svg>
<div class="t" id="t41" style="left:780.40px;transform-origin:0 50%;top:392.21px;font-size:9.5px;letter-spacing:0px;color:#e8e8e8;font-weight:normal;transform:scaleX(0.8663);">Geen</div>
<svg class="a" style="left:764px;top:413.5px" width="11" height="11"><circle cx="5.2" cy="5" r="4.2" fill="none" stroke="#a4a4a4" stroke-width="1.1"/></svg>
<div class="t" id="t42" style="left:780.40px;transform-origin:0 50%;top:413.21px;font-size:9.5px;letter-spacing:0px;color:#e8e8e8;font-weight:normal;transform:scaleX(0.9148);">Copyright en contactinfo</div>
<div class="a" style="left:754px;top:447px;width:191px;height:57px;border:1px solid #4a4a4a;border-radius:2px"></div>
<div class="a" style="left:762px;top:446px;width:106px;height:3px;background:#555555"></div>
<div class="t" id="t43" style="left:765.00px;transform-origin:0 50%;top:441.71px;font-size:9.5px;letter-spacing:0px;color:#e8e8e8;font-weight:normal;transform:scaleX(0.8840);">Content Credentials (Beta)</div>
<div class="t" id="t44" style="left:764.60px;transform-origin:0 50%;top:461.51px;font-size:9.5px;letter-spacing:0px;color:#e8e8e8;font-weight:normal;transform:scaleX(0.9033);">Niet ingeschakeld voor dit document</div>
<div class="t" id="t45" style="left:765.00px;transform-origin:0 50%;top:480.71px;font-size:9.5px;letter-spacing:0px;color:#4b9ef2;font-weight:normal;transform:scaleX(0.9486);">Meer informatie</div>
<div class="a" style="left:752px;top:23px;width:201px;height:538px;overflow:hidden">
<div class="a" style="left:2px;top:492px;width:191px;height:70px;border:1px solid #4a4a4a;border-radius:2px"></div>
</div>
<div class="a" style="left:762px;top:514px;width:48px;height:3px;background:#555555"></div>
<div class="t" id="t46" style="left:765.00px;transform-origin:0 50%;top:510.71px;font-size:9.5px;letter-spacing:0px;color:#e8e8e8;font-weight:normal;transform:scaleX(0.9165);">Kleurruimte</div>
<svg class="a" style="left:766px;top:530px" width="10" height="10"><rect x="0" y="0" width="10" height="10" rx="2" fill="#d9d9d9"/><path d="M2.3 5.1l1.9 2L7.8 2.8" stroke="#2e2e2e" stroke-width="1.5" fill="none" stroke-linecap="round" stroke-linejoin="round"/></svg>
<div class="t" id="t47" style="left:782.30px;transform-origin:0 50%;top:528.71px;font-size:9.5px;letter-spacing:0px;color:#e8e8e8;font-weight:normal;transform:scaleX(0.8684);">Omzetten in sRGB</div>
<svg class="a" style="left:766px;top:548px" width="10" height="10"><rect x="0" y="0" width="10" height="10" rx="2" fill="#d9d9d9"/><path d="M2.3 5.1l1.9 2L7.8 2.8" stroke="#2e2e2e" stroke-width="1.5" fill="none" stroke-linecap="round" stroke-linejoin="round"/></svg>
<div class="t" id="t48" style="left:782.30px;transform-origin:0 50%;top:547.21px;font-size:9.5px;letter-spacing:0px;color:#e8e8e8;font-weight:normal;transform:scaleX(0.9117);">Kleurprofiel insluiten</div>
<div class="t" id="t49" style="left:754.50px;transform-origin:0 50%;top:570.91px;font-size:9.5px;letter-spacing:0px;color:#e8e8e8;font-weight:normal;transform:scaleX(0.7739);">v5.12.9</div>
<div class="a" style="left:817px;top:563px;width:64px;height:21px;border:2px solid #e6e6e6;border-radius:11px"></div>
<div class="t" id="t50" style="left:699.00px;width:300px;text-align:center;transform-origin:50% 50%;top:567.78px;font-size:9px;letter-spacing:0px;color:#f0f0f0;font-weight:bold;transform:scaleX(0.9231);">Annuleren</div>
<div class="a" style="left:888.5px;top:563px;width:66px;height:21px;background:#1473e6;border-radius:11px"></div>
<div class="t" id="t51" style="left:771.80px;width:300px;text-align:center;transform-origin:50% 50%;top:567.78px;font-size:9px;letter-spacing:0px;color:#ffffff;font-weight:bold;transform:scaleX(0.9339);">Exporteren</div>
<div class="a" style="left:953px;top:29px;width:6px;height:497px;background:#606060;border-radius:3px"></div>
<div class="a" style="left:823px;top:73px;width:101px;height:72px;background:#2c2c2c;border:1px solid #575757;border-radius:3px;box-shadow:0 1px 3px rgba(0,0,0,.35)"></div>
<div class="a" style="left:824px;top:98.5px;width:99px;height:21.5px;background:#393939"></div>
<div class="t" id="t52" style="left:832.00px;transform-origin:0 50%;top:83.11px;font-size:9.5px;letter-spacing:0px;color:#f0f0f0;font-weight:normal;transform:scaleX(0.8703);">PNG</div>
<div class="t" id="t53" style="left:832.00px;transform-origin:0 50%;top:104.11px;font-size:9.5px;letter-spacing:0px;color:#f0f0f0;font-weight:normal;transform:scaleX(0.7796);">JPG</div>
<div class="t" id="t54" style="left:832.00px;transform-origin:0 50%;top:125.51px;font-size:9.5px;letter-spacing:0px;color:#f0f0f0;font-weight:normal;transform:scaleX(0.8310);">GIF</div>
<svg class="a" style="left:906px;top:104px" width="11" height="10"><path d="M2.3 6.3l2.95 2.4L8.5 2.8" stroke="#2d8cf0" stroke-width="1.5" fill="none" stroke-linecap="round"/></svg>
<svg class="a" style="left:883.5px;top:105.5px" width="13" height="13" viewBox="0 0 16 16"><path d="M4.6 8V1.9a1.6 1.6 0 0 1 3.2 0V6.3a1.2 1.2 0 0 1 2.3 0.4V7.1a1.2 1.2 0 0 1 2.2 0.5V8a1.1 1.1 0 0 1 2.2 0.3V12c0 2-1.2 3.6-3.3 3.6H7.4c-1.2 0-1.9-0.6-2.7-1.6L1.4 10.2a1.1 1.1 0 0 1 1.6-1.4L4.6 10.3z" fill="#ffffff" stroke="#000" stroke-width="0.85" stroke-linejoin="round"/></svg>
</body></html>
